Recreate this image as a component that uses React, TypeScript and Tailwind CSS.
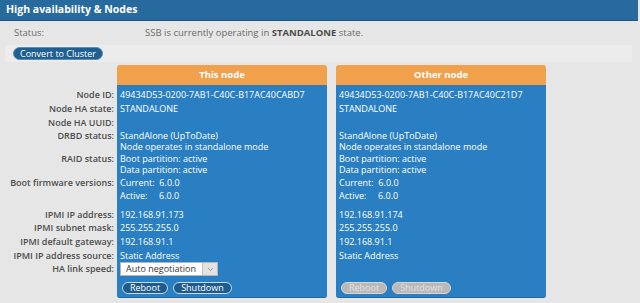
import { ChevronDown } from 'lucide-react';

// Row description for the node comparison table
interface NodeRow {
  label: string;
  h: string;
  pt?: string;
  thisNode: string[];
  otherNode: string[];
}

const rows: NodeRow[] = [
  { label: 'Node ID:', h: 'h-[14px]', thisNode: ['49434D53-0200-7AB1-C40C-B17AC40CABD7'], otherNode: ['49434D53-0200-7AB1-C40C-B17AC40C21D7'] },
  { label: 'Node HA state:', h: 'h-[14px]', thisNode: ['STANDALONE'], otherNode: ['STANDALONE'] },
  { label: 'Node HA UUID:', h: 'h-[14px]', thisNode: [''], otherNode: [''] },
  { label: 'DRBD status:', h: 'h-[24px]', pt: 'pt-[1px]', thisNode: ['StandAlone (UpToDate)', 'Node operates in standalone mode'], otherNode: ['StandAlone (UpToDate)', 'Node operates in standalone mode'] },
  { label: 'RAID status:', h: 'h-[23px]', pt: 'pt-[0px]', thisNode: ['Boot partition: active', 'Data partition: active'], otherNode: ['Boot partition: active', 'Data partition: active'] },
  { label: 'Boot firmware versions:', h: 'h-[13px]', thisNode: ['Current:\u00a0 6.0.0'], otherNode: ['Current:\u00a0 6.0.0'] },
  { label: '', h: 'h-[13px]', thisNode: ['Active:\u00a0\u00a0\u00a0\u00a0 6.0.0'], otherNode: ['Active:\u00a0\u00a0\u00a0\u00a0 6.0.0'] },
  { label: '', h: 'h-[5px]', thisNode: [], otherNode: [] },
  { label: 'IPMI IP address:', h: 'h-[14px]', thisNode: ['192.168.91.173'], otherNode: ['192.168.91.174'] },
  { label: 'IPMI subnet mask:', h: 'h-[13px]', thisNode: ['255.255.255.0'], otherNode: ['255.255.255.0'] },
  { label: 'IPMI default gateway:', h: 'h-[14px]', thisNode: ['192.168.91.1'], otherNode: ['192.168.91.1'] },
  { label: 'IPMI IP address source:', h: 'h-[14px]', thisNode: ['Static Address'], otherNode: ['Static Address'] },
];

function Pill({ children, disabled }: { children: string; disabled?: boolean }) {
  return (
    <span
      className={
        disabled
          ? 'h-[12px] px-[7px] rounded-full border border-[#d6d6d6] bg-[#b9b9b9] text-[#e2e2e2] text-[9px] leading-[10px] flex items-center'
          : 'h-[12px] px-[7px] rounded-full border border-[#c9dbea] bg-[#1f5c8e] text-white text-[9px] leading-[10px] flex items-center'
      }
    >
      {children}
    </span>
  );
}

function Cell({ lines, h, pt, other }: { lines: string[]; h: string; pt?: string; other?: boolean }) {
  return (
    <div className={`${other ? 'ml-[9px]' : ''} ${h} ${pt ?? 'flex items-center'} bg-[#2a7fc2] px-[3px] text-white text-[9px] leading-[11px] whitespace-nowrap`}>
      <div>
        {lines.map((l, i) => (
          <div key={i}>{l}</div>
        ))}
      </div>
    </div>
  );
}

export default function App() {
  return (
    <div className="w-[640px] h-[303px] bg-[#e6e6e6] overflow-hidden" style={{ fontFamily: '"Open Sans", "Liberation Sans", sans-serif' }}>
      <div className="w-[638px] h-[21px] bg-[#276a9d] border-b border-[#1d5480] flex items-center px-[6px] text-white text-[10.5px] font-bold">
        High availability &amp; Nodes
      </div>

      <div className="h-[24px] flex items-center text-[9.5px] text-[#6b6b6b]">
        <span className="w-[145px] pl-[14px]">Status:</span>
        <span>
          SSB is currently operating in <b className="text-[#4d4d4d]">STANDALONE</b> state.
        </span>
      </div>

      <div className="mx-[5px] w-[627px] h-[17px] rounded-[3px] bg-[#ececec] flex items-center pl-[8px]">
        <span className="h-[13px] px-[6px] rounded-full bg-[#1f5f91] border border-[#5d8db3] text-white text-[9px] flex items-center">
          Convert to Cluster
        </span>
      </div>

      <div className="mt-[3px] grid grid-cols-[117px_210px_219px] w-max">
        <div />
        <div className="h-[20px] rounded-t-[3px] bg-[#f1a14c] flex items-center justify-center text-white font-bold text-[9.5px]">
          This node
        </div>
        <div className="ml-[9px] h-[20px] rounded-t-[3px] bg-[#f1a14c] flex items-center justify-center text-white font-bold text-[9.5px]">
          Other node
        </div>

        <div className="h-[2px]" />
        <div className="h-[2px] bg-[#2a7fc2]" />
        <div className="ml-[9px] h-[2px] bg-[#2a7fc2]" />

        {rows.map((r, i) => (
          <div key={i} className="contents">
            <div className={`${r.h} ${r.pt ?? 'flex items-center'} justify-end pr-[3px] text-right text-[9px] leading-[11px] font-semibold text-[#4d4d4d] whitespace-nowrap`}>
              {r.label}
            </div>
            <Cell lines={r.thisNode} h={r.h} pt={r.pt} />
            <Cell lines={r.otherNode} h={r.h} pt={r.pt} other />
          </div>
        ))}

        <div className="h-[14px] flex items-center justify-end pr-[3px] text-[9px] font-semibold text-[#4d4d4d]">HA link speed:</div>
        <div className="h-[14px] bg-[#2a7fc2] px-[3px] flex items-center">
          <div className="w-[98px] h-[14px] bg-white border border-[#b5b5b5] flex items-center">
            <span className="flex-1 pl-[5px] text-[9px] text-[#333]">Auto negotiation</span>
            <span className="w-[15px] h-full bg-[#e3e3e3] border-l border-[#c4c4c4] flex items-center justify-center">
              <ChevronDown className="w-[9px] h-[9px] text-[#777]" strokeWidth={2} />
            </span>
          </div>
        </div>
        <div className="ml-[9px] h-[14px] bg-[#2a7fc2]" />

        <div />
        <div className="h-[22px] bg-[#2a7fc2] rounded-b-[3px] border-b-[1.5px] border-[#1f66a3] flex items-start gap-[5px] pl-[5px] pt-[6px]">
          <Pill>Reboot</Pill>
          <Pill>Shutdown</Pill>
        </div>
        <div className="ml-[9px] h-[22px] bg-[#2a7fc2] rounded-b-[3px] border-b-[1.5px] border-[#1f66a3] flex items-start gap-[5px] pl-[5px] pt-[6px]">
          <Pill disabled>Reboot</Pill>
          <Pill disabled>Shutdown</Pill>
        </div>
      </div>
    </div>
  );
}
